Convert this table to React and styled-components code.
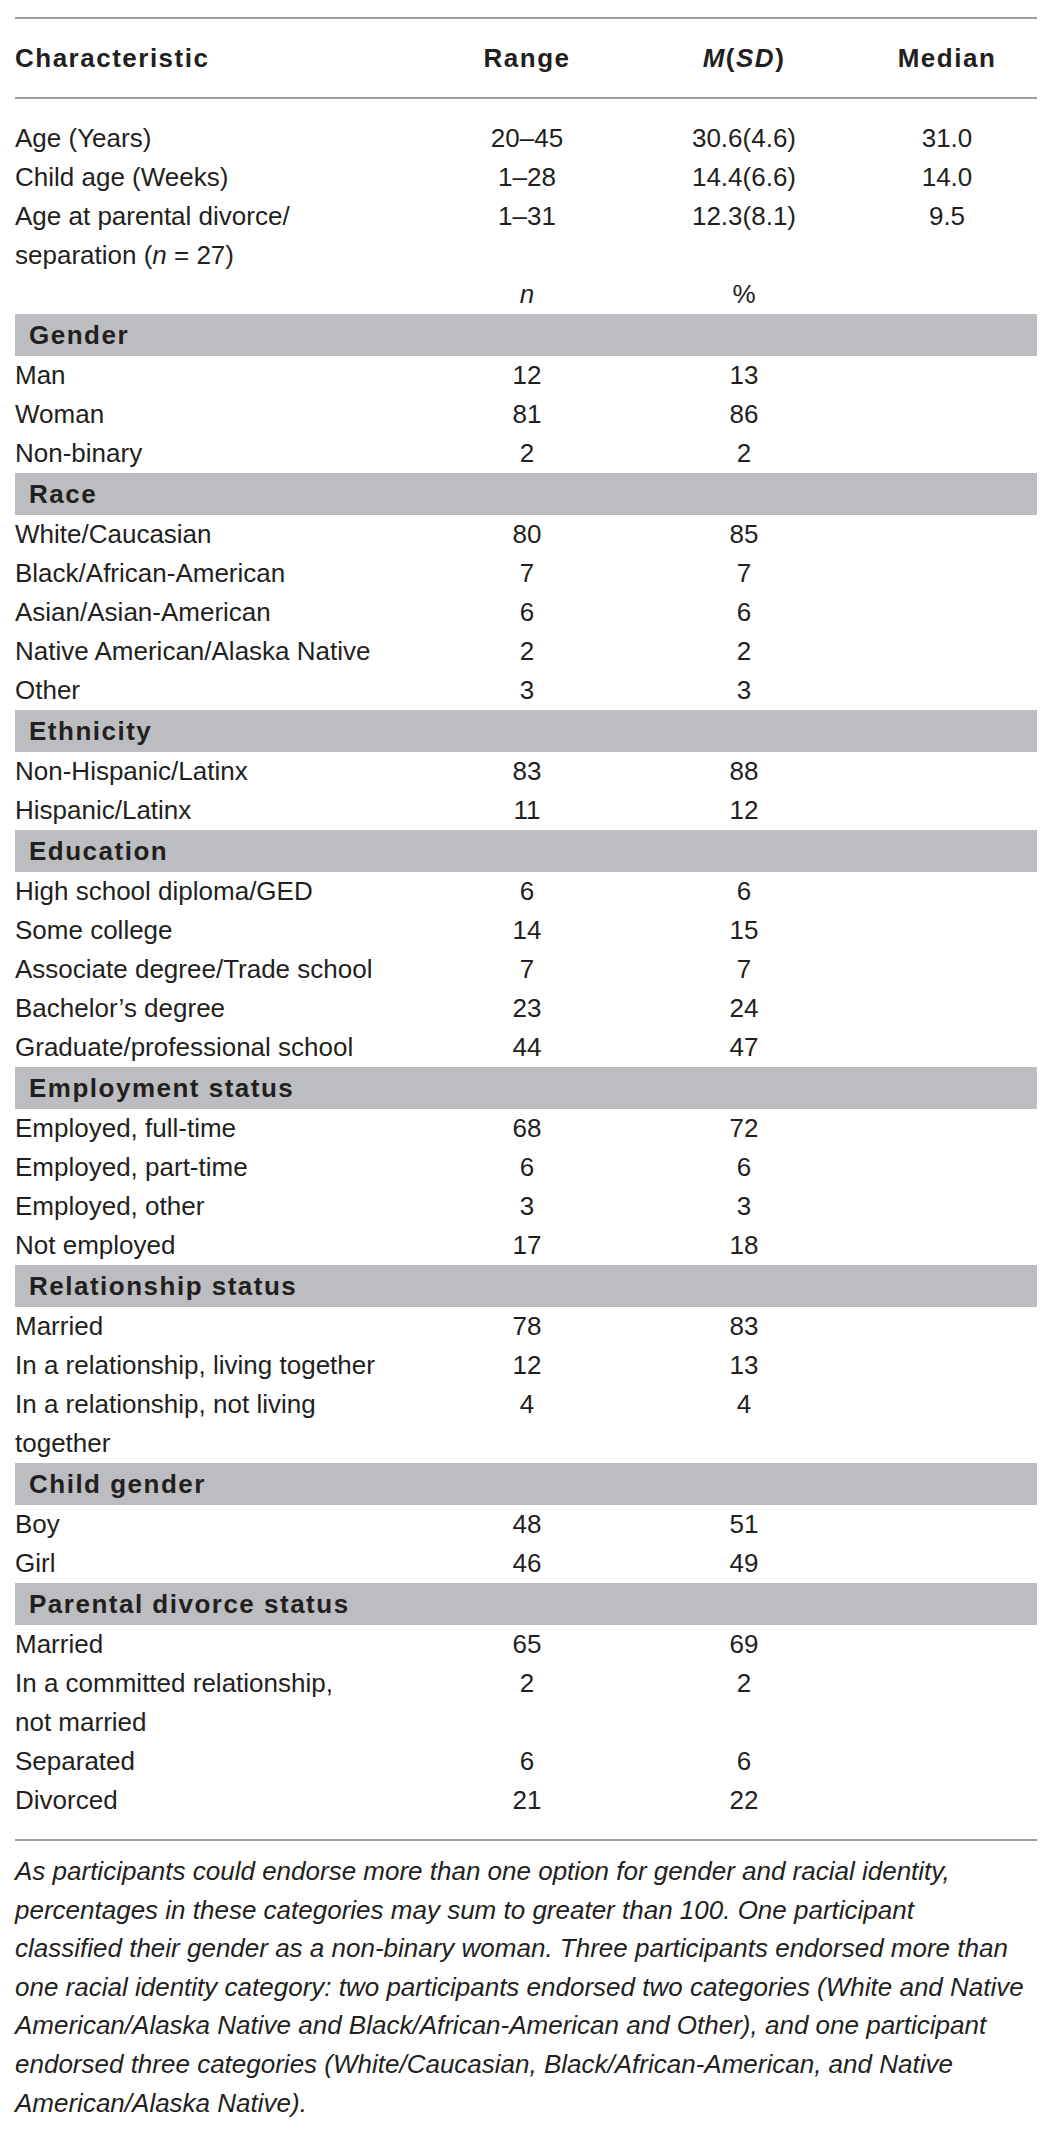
import React from "react";
import styled, { createGlobalStyle } from "styled-components";

const Global = createGlobalStyle`
  html, body { margin: 0; padding: 0; background: #ffffff; }
  body { font-family: "Liberation Sans", Arial, Helvetica, sans-serif; color: #231f20; }
`;

const Page = styled.div`
  width: 1022px;
  padding: 17px 18px 20px 15px;
`;

const Table = styled.div`
  border-top: 2px solid #9f9fa1;
  border-bottom: 2px solid #9f9fa1;
`;

const Row = styled.div`
  display: grid;
  grid-template-columns: 408px 208px 226px 180px;
  font-size: 26px;
  line-height: 39px;
`;

const HeadRow = styled(Row)`
  padding: 20px 0 19px;
  border-bottom: 2px solid #9f9fa1;
  font-weight: bold;
  letter-spacing: 1.5px;
`;

const Body = styled.div`
  padding: 20px 0 19px;
`;

const Label = styled.div`
  white-space: nowrap;
  text-align: left;
`;

const Cell = styled.div`
  text-align: center;
  white-space: nowrap;
`;

const Band = styled.div`
  background: #bcbdc0;
  height: 42px;
  line-height: 42px;
  padding-left: 14px;
  font-size: 26px;
  font-weight: bold;
  letter-spacing: 1.5px;
`;

const Note = styled.div`
  margin-top: 11px;
  font-size: 26px;
  line-height: 38.6px;
  font-style: italic;
  white-space: nowrap;
`;

const sections = [
  { title: "Gender", rows: [["Man", "12", "13"], ["Woman", "81", "86"], ["Non-binary", "2", "2"]] },
  {
    title: "Race",
    rows: [
      ["White/Caucasian", "80", "85"],
      ["Black/African-American", "7", "7"],
      ["Asian/Asian-American", "6", "6"],
      ["Native American/Alaska Native", "2", "2"],
      ["Other", "3", "3"],
    ],
  },
  { title: "Ethnicity", rows: [["Non-Hispanic/Latinx", "83", "88"], ["Hispanic/Latinx", "11", "12"]] },
  {
    title: "Education",
    rows: [
      ["High school diploma/GED", "6", "6"],
      ["Some college", "14", "15"],
      ["Associate degree/Trade school", "7", "7"],
      ["Bachelor\u2019s degree", "23", "24"],
      ["Graduate/professional school", "44", "47"],
    ],
  },
  {
    title: "Employment status",
    rows: [
      ["Employed, full-time", "68", "72"],
      ["Employed, part-time", "6", "6"],
      ["Employed, other", "3", "3"],
      ["Not employed", "17", "18"],
    ],
  },
  {
    title: "Relationship status",
    rows: [
      ["Married", "78", "83"],
      ["In a relationship, living together", "12", "13"],
      [["In a relationship, not living", "together"], "4", "4"],
    ],
  },
  { title: "Child gender", rows: [["Boy", "48", "51"], ["Girl", "46", "49"]] },
  {
    title: "Parental divorce status",
    rows: [
      ["Married", "65", "69"],
      [["In a committed relationship,", "not married"], "2", "2"],
      ["Separated", "6", "6"],
      ["Divorced", "21", "22"],
    ],
  },
];

const noteLines = [
  "As participants could endorse more than one option for gender and racial identity,",
  "percentages in these categories may sum to greater than 100. One participant",
  "classified their gender as a non-binary woman. Three participants endorsed more than",
  "one racial identity category: two participants endorsed two categories (White and Native",
  "American/Alaska Native and Black/African-American and Other), and one participant",
  "endorsed three categories (White/Caucasian, Black/African-American, and Native",
  "American/Alaska Native).",
];

function renderLabel(label) {
  if (Array.isArray(label)) {
    return label.map((l, i) => (
      <React.Fragment key={i}>
        {i > 0 && <br />}
        {l}
      </React.Fragment>
    ));
  }
  return label;
}

export default function App() {
  return (
    <>
      <Global />
      <Page>
        <Table>
          <HeadRow>
            <Label>Characteristic</Label>
            <Cell>Range</Cell>
            <Cell>
              <i>M</i>(<i>SD</i>)
            </Cell>
            <Cell>Median</Cell>
          </HeadRow>
          <Body>
            <Row>
              <Label>Age (Years)</Label>
              <Cell>20–45</Cell>
              <Cell>30.6(4.6)</Cell>
              <Cell>31.0</Cell>
            </Row>
            <Row>
              <Label>Child age (Weeks)</Label>
              <Cell>1–28</Cell>
              <Cell>14.4(6.6)</Cell>
              <Cell>14.0</Cell>
            </Row>
            <Row>
              <Label>
                Age at parental divorce/
                <br />
                separation (<i>n</i> = 27)
              </Label>
              <Cell>1–31</Cell>
              <Cell>12.3(8.1)</Cell>
              <Cell>9.5</Cell>
            </Row>
            <Row>
              <Label />
              <Cell>
                <i>n</i>
              </Cell>
              <Cell>%</Cell>
              <Cell />
            </Row>
            {sections.map((s) => (
              <React.Fragment key={s.title}>
                <Band>{s.title}</Band>
                {s.rows.map((r, i) => (
                  <Row key={i}>
                    <Label>{renderLabel(r[0])}</Label>
                    <Cell>{r[1]}</Cell>
                    <Cell>{r[2]}</Cell>
                    <Cell />
                  </Row>
                ))}
              </React.Fragment>
            ))}
          </Body>
        </Table>
        <Note>
          {noteLines.map((l, i) => (
            <div key={i}>{l}</div>
          ))}
        </Note>
      </Page>
    </>
  );
}
